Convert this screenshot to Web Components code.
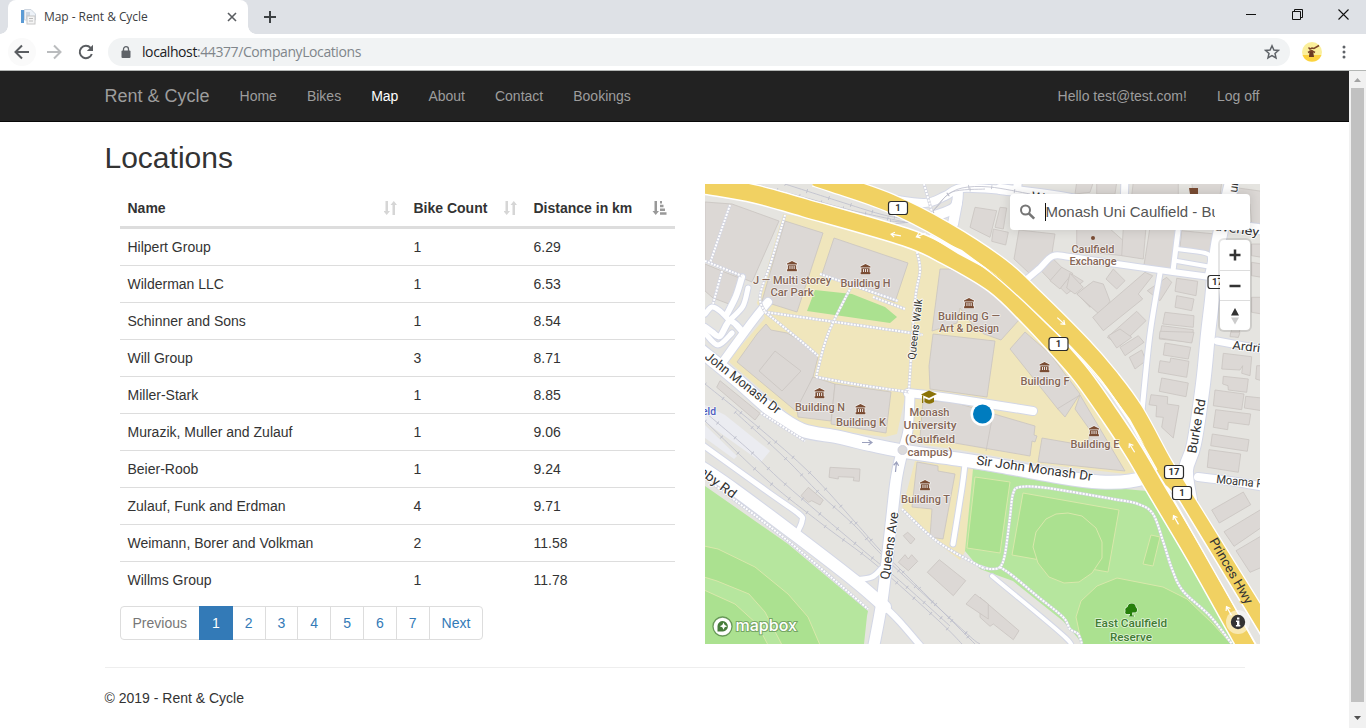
<!DOCTYPE html>
<html lang="en">
<head>
<meta charset="utf-8">
<title>Map - Rent &amp; Cycle</title>
<style>
html,body{margin:0;height:100%;overflow:hidden;background:#fff}
body{font-family:"Liberation Sans",Arial,sans-serif;font-size:14px;line-height:20px;color:#333}
</style>
</head>
<body>
<browser-window>
  <tab-strip slot="tabs">Map - Rent &amp; Cycle</tab-strip>
  <address-bar slot="toolbar" host="localhost" path=":44377/CompanyLocations"></address-bar>
  <site-nav></site-nav>
  <locations-page></locations-page>
  <scroll-bar slot="scroll"></scroll-bar>
</browser-window>
<script>
const define = (name, html) => customElements.define(name, class extends HTMLElement {
  constructor() {
    super();
    this.attachShadow({ mode: 'open' });
  }
  connectedCallback() {
    if (this.shadowRoot.childNodes.length) return;
    const t = document.createElement('template');
    t.innerHTML = typeof html === 'function' ? html(this) : html;
    this.shadowRoot.append(t.content.cloneNode(true));
  }
});

/* ---------- map drawing helpers ---------- */
const pts = s => s.trim().split(/\s+/).map(p => p.split(',').map(Number));
const smooth = s => {
  const p = pts(s);
  let d = `M${p[0]}`;
  for (let i = 0; i < p.length - 1; i++) {
    const a = p[i - 1] || p[i], b = p[i], c = p[i + 1], e = p[i + 2] || c;
    d += `C${b[0] + (c[0] - a[0]) / 6},${b[1] + (c[1] - a[1]) / 6} ${c[0] - (e[0] - b[0]) / 6},${c[1] - (e[1] - b[1]) / 6} ${c}`;
  }
  return d;
};
const local = (ox, oy, list) => list.map(s => {
  const q = pts(s).map(([x, y]) => `${(ox + x / 3).toFixed(1)},${(oy + y / 3).toFixed(1)}`).join(' ');
  return `<polygon points="${q}"/>`;
}).join('');
const polys = list => list.map(s => `<polygon points="${s}"/>`).join('');

const buildings = polys([
  '705,202 732,204 779,221 752,282 742,278 705,261',
  '705,264 722,271 742,279 729,304 713,298 705,291',
  '785,221 823,233 797,312 762,301',
  '834,238 908,263 895,302 822,274',
  '940,269 950,269 990,287 1019,320 1001,340 984,334 973,325 960,308 957,323 932,331',
  '933,334 995,341 987,397 930,389 929,366',
  '923,401 953,402 1035,426 1034,435 1037,436 1035,442 1032,441 1030,456 920,437',
  '1010,349 1025,332 1050,354 1080,394 1065,417 1057,408',
  '1075,409 1080,395 1125,471 1038,462 1042,438 1088,446 1090,430',
  '757,334 766,324 771,330 787,333 802,342 818,357 813,377 797,412 737,362',
  '813,377 835,384 831,421 798,417 797,408',
  '835,384 891,392 886,433 831,424',
  '917,462 938,466 938,471 955,474 943,539 930,537 932,509 912,507'
]) + local(890, 184, [
  '255,70 320,80 300,160 240,130', '330,70 350,72 340,135 315,130', '310,135 355,145 347,183 305,172',
  '387,138 495,150 480,245 418,268 372,225',
  '490,225 520,255 482,290 455,262', '515,250 548,268 510,315 480,290', '545,270 580,292 530,330 512,312', '600,300 600,370 562,330'
]) + local(1070, 184, [
  '20,130 115,130 160,170 158,215 20,200', '160,130 228,130 220,225 155,215', '240,130 322,130 305,258 222,243',
  '335,140 435,150 430,205 330,190', '130,255 165,290 140,315 108,285',
  '20,330 70,292 100,300 108,320 120,352 90,393', '0,268 40,310 15,330 -10,312',
  '225,265 248,275 205,330 218,345 100,440 68,400', '290,280 305,295 270,350 232,320',
  '200,382 228,410 150,485 112,460', '320,283 383,292 378,335 315,322', '320,335 372,345 365,380 315,370',
  '285,385 372,395 370,430 278,420', '275,425 370,437 365,475 268,465',
  '190,-5 325,-5 325,35 185,35', '365,-5 455,-5 450,35 370,35', '505,12 575,22 575,120 545,120 540,60 500,50',
  '545,180 575,180 575,220 545,215', '545,235 575,240 575,280 545,275', '545,340 575,340 575,390 545,385', '485,430 510,435 505,460 482,455',
  '20,-5 70,-5 60,25 15,30', '80,-5 140,-5 135,30 80,30'
]) + local(1070, 334, [
  '460,58 545,68 540,125 515,118 518,95 510,108 455,105', '460,127 535,135 530,175 475,168 474,155 458,150',
  '435,168 522,180 515,227 430,215', '527,187 575,192 575,230 523,222', '560,95 575,95 575,140 557,135',
  '437,227 542,240 537,273 475,265 473,287 430,280', '427,300 537,317 532,352 422,335', '417,347 512,360 505,415 412,400',
  '285,27 362,40 355,75 280,63', '270,-8 372,-5 365,27 268,12', '270,80 300,85 302,72 357,82 350,130 265,115',
  '275,132 355,147 348,188 268,172', '243,182 293,188 292,210 327,215 310,312 275,280 280,250 258,248 260,215 237,212',
  '115,5 150,-15 185,10 140,42', '205,5 222,25 165,65 150,40', '215,48 228,80 195,105 178,70', '482,-5 510,-5 505,10 480,8'
]) + local(980, 484, [
  '790,24 812,62 718,117 695,78', '845,75 845,130 762,187 732,143', '845,155 845,250 810,265 768,200', '0,340 35,370 117,440 100,467 40,420 30,427 0,400'
]) + local(705, 484, [
  '310,10 355,48 345,63 320,50 310,55 288,35', '608,145 630,165 617,180 595,155', '580,235 600,212 610,225 620,212 638,232 610,260',
  '703,227 782,290 745,335 667,265', '810,330 850,360 850,405 783,360'
]) + local(705, 334, [
  '375,400 465,405 463,442 445,440 447,430 400,428 400,435 372,430', '45,140 165,238 150,258 35,160'
]);

const roads = [
  [6, '742,277 736,296 727,314'], [5, '748,288 743,306 731,319'],
  [6, '705,327 712,332 720,336 730,321 742,331'], [5, '705,314 712,307 720,311 730,321'],
  [8, '768,302 752,322 722,363'], [5, '705,333 718,345 732,333'],
  [13, '690,342 705,354 738,381 772,411 802,430 838,437 872,445 902,451 957,459 1000,466 1060,477 1100,482 1130,481 1172,471'],
  [9, '910,396 908,430 902,452'], [11, '902,452 896,481 890,534 882,601 873,650'],
  [12, '700,466 735,490 798,537 855,581 885,607'], [6, '885,607 900,622 924,650'],
  [5, '700,443 768,492 799,514 802,521 798,531'], [5, '855,580 872,577 882,568'],
  [8, '908,393 950,398 1033,411'], [5, '965,464 962,488 953,544'],
  [14, '1233,178 1218,245 1212,300 1208,334 1203,384 1194,444 1186,470 1190,500'],
  [8, '1198,477 1230,481 1265,487'], [7, '1217,341 1265,350'],
  [10, '1000,189 1060,197 1130,211 1215,223 1265,230'], [7, '1125,178 1124,210'], [8, '1018,178 1017,192'],
  [6, '1027,279 1040,268 1053,256 1070,257 1117,264 1173,272 1210,277'],
  [5, '1160,273 1150,334 1142,411'], [5, '1178,231 1173,271'],
  [4, '1177,249 1205,253 1210,259 1207,275'], [4, '1177,261 1217,268'],
  [8, '890,199 925,203 945,196 962,188 1003,190'], [10, '935,216 955,207 958,190'], [10, '953,224 957,203']
  , [4, '992,576 1066,638 1067,648']
];
const roadLayer = roads.map(([w, s]) => `<path stroke="#d3d7e6" stroke-width="${w + 2}" d="${smooth(s)}"/>`).join('')
  + roads.map(([w, s]) => `<path stroke="#fff" stroke-width="${w}" d="${smooth(s)}"/>`).join('');

const paths = [
  '730,205 710,263', '705,261 742,276', '722,271 713,304', '785,215 771,262 760,296 765,312', '765,312 905,332 921,335', '820,274 898,301',
  '873,297 905,309', '851,287 828,334 816,377', '765,312 802,342 818,356', '816,377 860,385 909,392', '917,252 920,271 915,301 909,389',
  '980,566 990,569 1000,567 1005,554 1010,517 1013,494 1020,487 1047,488 1113,499 1138,504 1153,514 1163,541 1172,569 1183,591 1210,616 1232,644',
  '1000,567 1013,576 1037,596 1063,617 1070,629 1078,634 1082,644', '902,509 938,542 985,569', '705,478 788,541 868,609', '761,413 805,441',
  '924,184 932,212'
];
const pathLayer = paths.map(s => `<path stroke="#d2d4e0" stroke-width="3" d="${smooth(s)}"/><path stroke="#fff" stroke-width="2" stroke-dasharray="2 1.2" d="${smooth(s)}"/>`).join('');

const rails = ['705,384 758,427 810,473 855,522 880,550 902,571 975,644', '705,421 768,481 822,524 875,564 939,621 962,644',
  '735,412 785,458 820,494 855,526 885,558 965,632 980,644', '700,408 748,449 785,484 858,546 900,581 950,626',
  '755,184 803,197 850,210 905,222', '785,184 838,201 880,214 905,219'];
const curves = ['890,221 915,222 930,214 945,197 962,188 990,187 1030,194', '890,224 920,220 936,208 952,192 985,189'];
const railLine = s => `<path stroke="#bcbecb" stroke-width=".8" d="${smooth(s)}"/><path stroke="#bcbecb" stroke-width="4" stroke-dasharray=".8 22" d="${smooth(s)}"/>`;

const hwyA = smooth('815,177 833,183 890,203 945,231 1000,267 1034,298 1082,346 1109,377 1134,411 1162,462 1181,493 1251,606 1282,657');
const hwyB = smooth('690,182 705,185 755,194 805,208 905,237 945,255 994,284 1029,317 1056,346 1082,376 1111,417 1134,452 1154,486 1199,562 1252,657');

const label = (x, y, t, w) => `<text x="${x}" y="${y}" textLength="${w}" lengthAdjust="spacingAndGlyphs">${t}</text>`;
const street = (x, y, r, t, w, size = 13) => `<text transform="translate(${x} ${y}) rotate(${r})" font-size="${size}" textLength="${w}" lengthAdjust="spacingAndGlyphs">${t}</text>`;
const museum = (x, y) => `<path transform="translate(${x - 5.5} ${y - 5})" d="M5.5 0 10.5 2.4V3.6H.5V2.4zM1.4 4.2H9.6V8.2H10.4V10.2H.6V8.2H1.4zM3 5V8H3.9V5zM5.1 5V8H6V5zM7.2 5V8H8.1V5z" fill="#7a4c33" fill-rule="evenodd" stroke="#fff" stroke-opacity=".7" stroke-width="1.2" paint-order="stroke"/>`;
const shield = (x, y, t) => `<rect x="${x - 9.5}" y="${y - 6.5}" width="19" height="13" rx="2.5" fill="#fff" stroke="#2b2b2b" stroke-width="1.2"/><text x="${x}" y="${y + 3.3}" text-anchor="middle" font-size="9.5" font-weight="700" fill="#333">${t}</text>`;
const arrow = (x, y, r, c = '#fff') => `<path transform="translate(${x} ${y}) rotate(${r})" d="M-5 0H5M1.5-2.5 5 0 1.5 2.5" fill="none" stroke="${c}" stroke-width="1.2"/>`;

define('campus-map', `
<style>
:host{display:block;flex:none;position:relative;width:555.5px;height:460px;overflow:hidden;background:#e5e4e0}
.map{display:block}
.search{position:absolute;left:305px;top:10px;width:240px;height:36px;background:#fff;border-radius:4px;box-shadow:0 0 10px 2px rgba(0,0,0,.1);display:flex;align-items:center;box-sizing:border-box;padding:0 35px 0 9px}
.search svg{flex:none;margin-right:9px}
.field{flex:1;overflow:hidden;white-space:nowrap;font-size:15px;line-height:22px;color:#555;border-left:1px solid #111;height:18px;display:flex;align-items:center}
.zoom{position:absolute;left:515px;top:56px;width:30px;background:#fff;border-radius:4px;box-shadow:0 0 0 2px rgba(0,0,0,.1);display:flex;flex-direction:column}
.zoom div{height:30px;box-sizing:border-box;display:flex;align-items:center;justify-content:center}
.zoom div+div{border-top:1px solid #ddd}
</style>
<svg class="map" width="556" height="460" viewBox="705 184 556 460" font-family="Roboto,sans-serif">
<rect x="705" y="184" width="556" height="460" fill="#e5e4e0"/>
<g fill="#f0e6bc">
<polygon points="783,214 830,222 905,246 942,264 992,292 1023,319 1045,346 1072,374 1100,412 1127,449 1140,471 1126,474 1040,464 960,450 925,445 912,436 910,395 904,402 897,434 885,437 832,430 806,425 790,415 728,361 765,318 757,303"/>
<polygon points="915,461 975,468 966,550 960,560 940,545 902,509"/>
</g>
<g fill="#b6e69e">
<polygon points="705,486 788,544 868,611 867,616 864,644 705,644"/>
<polygon points="973,469 1090,486 1147,491 1242,650 1082,644 1077,637 1063,621 1013,581 980,569 965,551"/>
</g>
<g fill="#abe190" stroke="#d9e8ab" stroke-width="1">
<polygon points="815,290 852,294 885,307 897,317 890,323 807,311" stroke="none"/>
<path d="M704 546 718 549 755 567 788 594 808 617 820 645H782L765 612 749 594 717 581 704 577Z"/>
<path d="M704 590 735 604 757 624 768 645H704Z"/>
<polygon points="975,477 1010,482 1000,553 967,548"/>
<polygon points="1023,493 1119,510 1108,572 1012,555"/>
<polygon points="1068,513 1082,516 1096,528 1102,542 1102,558 1092,573 1079,582 1064,583 1049,577 1038,563 1033,547 1036,532 1046,519 1056,514"/>
<polygon points="1151,535 1160,537 1153,566 1143,564"/>
<polygon points="1117,578 1163,587 1187,599 1213,624 1232,645 1082,645 1076,617 1081,601 1097,586"/>
</g>
<g fill="#ebecf1"><polygon points="725,415 770,451 761,462 705,422 705,405"/><polygon points="705,425 737,456 734,459 705,438"/></g>
<g fill="#dcd8d5" stroke="#c9c4c0" stroke-width=".8">${buildings}<polygon points="775,351 801,371 782,391 759,371"/><path d="M992 419 986 451M1080 395 1057 409"/></g>
<g fill="none">${rails.map(railLine).join('')}</g>
<g fill="none" stroke-linecap="round" stroke-linejoin="round">${roadLayer}</g>
<g fill="none">${curves.map(railLine).join('')}</g>
<circle cx="902.5" cy="450" r="4.5" fill="#dcdbdc" stroke="#d0d2de"/>
<g fill="none">${pathLayer}</g>
<g fill="none"><path d="${hwyA}" stroke="#fff" stroke-width="20"/><path d="${hwyB}" stroke="#fff" stroke-width="20"/><path d="${hwyA}" stroke="#f1d162" stroke-width="17.5"/><path d="${hwyB}" stroke="#f1d162" stroke-width="17"/>
<path d="${smooth('930,235 962,253 990,272 1021,299 1050,327 1071,347 1100,379 1129,421 1157,470')}" stroke="#fff" stroke-width="1.3"/></g>
<path d="M925 233.500 962 250 990 271 958 254ZM1100 378 1130 419 1145 446 1117 405Z" fill="#fff"/>
<path d="M1166 486 1173 493 1180 502 1262 637V655L1213 569Z" fill="#e5e4e0" stroke="#fff" stroke-width="1.5"/>
${arrow(896, 235, 190)}${arrow(921, 235, 158)}${arrow(1061, 321, 42)}${arrow(1132, 448, 238)}${arrow(1176, 520, 240)}${arrow(1229, 611, 240)}
${arrow(867, 442.5, 0, '#9ba0bd')}${arrow(896, 467, 276, '#9ba0bd')}
<g fill="#333" stroke="#fff" stroke-width="2" stroke-opacity=".8" paint-order="stroke" stroke-linejoin="round">
${street(704, 358, 38, 'John Monash Dr', 92)}${street(976, 464.5, 8, 'Sir John Monash Dr', 117)}${street(1196, 454, -80, 'Burke Rd', 55)}
${street(889, 580, -82, 'Queens Ave', 68)}${street(1216, 483, 6, 'Moama R', 47, 12)}
${street(1232, 349, 7, 'Ardri', 28, 12)}${street(698, 473, 37, 'nby Rd', 43)}${street(1214, 230, 8, 'averley', 45, 12)}${street(915, 360, -83, 'Queens Walk', 61, 10.5)}${street(1237, 193, -82, 'ur', 11, 12)}${street(1031, 200, 8, 'W', 13, 12)}
<g stroke="#f1d162">${street(1209, 541, 60, 'Princes Hwy', 74)}</g>
</g>
<g font-size="11" fill="#856656" font-weight="500" text-anchor="middle" stroke="#fff" stroke-width="1.6" stroke-opacity=".65" paint-order="stroke" stroke-linejoin="round">
${label(792, 284, 'J — Multi storey', 78)}${label(792, 296, 'Car Park', 43)}${label(865.5, 286.5, 'Building H', 50)}
${label(969, 320, 'Building G —', 62)}${label(969, 332, 'Art &amp; Design', 60)}${label(1093, 253, 'Caulfield', 43)}${label(1093, 265, 'Exchange', 47)}
${label(1045, 385, 'Building F', 49)}${label(820, 410.5, 'Building N', 50)}${label(861, 426, 'Building K', 50)}${label(1095, 448, 'Building E', 49)}${label(925.5, 502.5, 'Building T', 49)}
${label(929.5, 416, 'Monash', 40)}${label(930, 429, 'University', 53)}${label(930, 442.5, '(Caulfield', 50)}${label(930, 455.5, 'campus)', 45)}
<g fill="#427b34">${label(1131, 627, 'East Caulfield', 72)}${label(1131, 640.5, 'Reserve', 42)}</g>
<g fill="#4d5bc0">${label(709, 415, 'eld', 14)}</g>
</g>
${[[792, 266], [865.5, 269], [969, 303], [1044.5, 367], [819.5, 393], [860.5, 409], [1094, 431], [925, 485]].map(a => museum(...a)).join('')}
<path d="M1189 188H1198V194H1190Z" fill="#7a4c33"/><circle cx="1093" cy="238" r="2" fill="#7a4c33"/>
<path d="M921 394.500 929 390.500 937 394 929 398ZM924.500 398 929 400.200 934 397.500V402Q929 405.500 924.500 402ZM922 395.500V403H923.200V395.500Z" fill="#8b7308"/>
<path d="M1130 614.500V611.500L1131 612.500V614H1126.500Q1124.500 613.500 1125.500 611Q1124.500 608 1127.500 607Q1128.500 603.200 1132 603.600Q1135.500 604 1135.700 607Q1138 609 1136.500 612Q1135.500 612.800 1132.200 612.500V615.500H1134V616.500H1128.500V615.500H1130Z" fill="#26800a" stroke="#fff" stroke-opacity=".8" stroke-width="1.2" paint-order="stroke"/>
${shield(898, 208, '1')}${shield(1058.5, 344, '1')}${shield(1174, 472, '17')}${shield(1182, 493, '1')}${shield(1217.5, 282, '17')}
<circle cx="982.5" cy="414" r="12" fill="#fff"/><circle cx="982.5" cy="414" r="9.5" fill="#007cbf"/>
<g><circle cx="722.5" cy="626.5" r="9.5" fill="#fff" stroke="#4f8240" stroke-opacity=".8" stroke-width="1.3"/><path d="M717.500 631.500V626A5.200 5.200 0 1 1 723 631.500Z" fill="#477c3b"/><path d="M723.500 622.500 724.700 625.100 727.200 626.200 724.700 627.300 723.500 629.800 722.300 627.300 719.800 626.200 722.300 625.100Z" fill="#fff"/>
<text x="735.5" y="631" font-family="Inter,sans-serif" font-weight="500" font-size="16.5" textLength="61.5" lengthAdjust="spacingAndGlyphs" fill="#fff" stroke="#6c9c5c" stroke-width="2" stroke-opacity=".85" paint-order="stroke">mapbox</text></g>
<circle cx="1238" cy="622" r="12" fill="#fff" fill-opacity=".5"/><circle cx="1238" cy="622" r="7.2" fill="#333"/><path d="M1237 617.500H1239.400V619.500H1237ZM1236 620.500H1239.400V625H1240.300V626.500H1235.900V625H1237V622H1236Z" fill="#fff"/>
</svg>
<div class="search"><svg width="17" height="17" viewBox="0 0 17 17" fill="none" stroke="#757575" stroke-width="2"><circle cx="6.500" cy="6" r="4.500"/><path d="M9.800 9.300 15.200 14.700" stroke-width="2.600"/></svg><div class="field">Monash Uni Caulfield - Bu</div></div>
<div class="zoom"><div><svg width="12" height="12"><path d="M6 .5V11.500M.5 6H11.500" stroke="#333" stroke-width="2.500"/></svg></div><div><svg width="12" height="12"><path d="M.5 6H11.500" stroke="#333" stroke-width="2.500"/></svg></div><div><svg width="10" height="18"><path d="M5 1 9 8.500H1Z" fill="#333"/><path d="M5 17.500 9 10.500H1Z" fill="#ccc"/></svg></div></div>`);

/* ---------- browser chrome ---------- */
define('browser-window', `
<style>
:host{display:flex;flex-direction:column;width:1366px;height:728px}
.view{flex:1;display:flex;min-height:0}
.doc{flex:1;overflow:hidden;background:#fff}
</style>
<slot name="tabs"></slot><slot name="toolbar"></slot>
<div class="view"><div class="doc"><slot></slot></div><slot name="scroll"></slot></div>`);

define('tab-strip', `
<style>
:host{display:flex;height:34px;background:#dee1e6;align-items:stretch;font-family:"Open Sans","Noto Sans",sans-serif;color:#3c4043}
.tab{position:relative;width:240px;margin-left:8px;background:#fff;border-radius:8px 8px 0 0;display:flex;align-items:center;box-sizing:border-box;padding:0 11px 0 12px}
.tab:before,.tab:after{content:"";position:absolute;bottom:0;width:8px;height:8px;background:radial-gradient(circle at 0 0,transparent 7.5px,#fff 8px)}
.tab:before{left:-8px}
.tab:after{right:-8px;background:radial-gradient(circle at 100% 0,transparent 7.5px,#fff 8px)}
.title{flex:1;margin-left:8px;font-size:12px;letter-spacing:-.06px;white-space:nowrap}
.plus{margin:11px 0 0 16px}
.win{margin-left:auto;display:flex;gap:35px;align-items:center;height:28px;padding-right:17.500px}
</style>
<div class="tab">
<svg width="16" height="16"><path d="M4.500.5H11L15.500 5V11H4.500Z" fill="#edf2f8" stroke="#cdd5df"/><rect x="1" y="1" width="3" height="13" fill="#5b9bd5"/><rect x="6" y="3" width="4" height="7" fill="#cbd6e3"/><rect x="7" y="7" width="8" height="8" fill="#f5f5f5" stroke="#c6c6c6"/><path d="M9 9.500H13M9 12H13" stroke="#bbb"/></svg>
<span class="title"><slot></slot></span>
<svg width="10" height="10"><path d="M1 1 9 9M9 1 1 9" stroke="#5a5d61" stroke-width="1.600"/></svg>
</div>
<svg class="plus" width="12" height="12"><path d="M6 0V12M0 6H12" stroke="#3c4043" stroke-width="2"/></svg>
<div class="win">
<svg width="11" height="11"><path d="M0 5.500H10" stroke="#111"/></svg>
<svg width="11" height="11" fill="none" stroke="#111"><path d="M.5 2.500H8.500V10.500H.5ZM2.500 2.500V.5H10.500V8.500H8.500"/></svg>
<svg width="11" height="11"><path d="M.5.5 10.500 10.500M10.500.5.5 10.500" stroke="#111" stroke-width="1.100"/></svg>
</div>`);

define('address-bar', el => `
<style>
:host{display:flex;align-items:center;height:37px;box-sizing:border-box;border-bottom:1px solid #b3b6b4;background:#fff;padding:0 20px 0 8px}
.ico{width:28px;height:28px;border-radius:50%;display:flex;align-items:center;justify-content:center}
.back{background:#fafafa}
.pill{flex:1;height:28px;border-radius:14px;background:#f1f3f4;display:flex;align-items:center;padding:0 10px 0 13px;margin-left:8px}
.nav{display:flex;gap:4px}
.url{flex:1;margin-left:11px;font:14px/20px "Open Sans","Noto Sans",sans-serif;color:#80868b;letter-spacing:-.41px}
.url b{font-weight:400;color:#202124}
.me{margin:0 20px 0 12px}
</style>
<div class="nav">
<div class="ico back"><svg width="16" height="16" fill="none" stroke="#5a5d61" stroke-width="2"><path d="M15 8H2M8 1.500 1.500 8 8 14.500"/></svg></div>
<div class="ico"><svg width="16" height="16" fill="none" stroke="#babcbe" stroke-width="2"><path d="M1 8H14M8 1.500 14.500 8 8 14.500"/></svg></div>
<div class="ico"><svg width="16" height="16" fill="none" stroke="#5a5d61" stroke-width="2"><path d="M13.800 10A6.200 6.200 0 1 1 12.600 3.800"/><path d="M15 .8V7H8.800Z" fill="#5a5d61" stroke="none"/></svg></div>
</div>
<div class="pill"><svg width="10" height="13"><rect y="4.500" x=".5" width="9" height="7.500" rx="1" fill="#5f6368"/><path d="M2.500 5V3.200A2.500 2.500 0 0 1 7.500 3.200V5" fill="none" stroke="#5f6368" stroke-width="1.300"/></svg>
<span class="url"><b>${el.getAttribute('host')}</b>${el.getAttribute('path')}</span>
<svg width="16" height="16" viewBox="0 0 16 16"><path d="M8 1.800 9.900 6 14.400 6.400 11 9.400 12 13.900 8 11.500 4 13.900 5 9.400 1.600 6.400 6.100 6Z" fill="none" stroke="#5f6368" stroke-width="1.500"/></svg></div>
<svg class="me" width="20" height="20"><circle cx="10" cy="10" r="10" fill="#fbef9b"/><path d="M.6 13H19.400A10 10 0 0 1 .6 13Z" fill="#fdd23e"/><path d="M7.500 8.500H11L12 15H7Z" fill="#6b3a22"/><path d="M6.500 5.500 8 7 10 6 12 6.500 17 3.500M6 10.500 9.500 8.500 13 10.500" stroke="#7a4427" stroke-width="1.500" fill="none"/></svg>
<svg width="4" height="14" fill="#5f6368"><circle cx="2" cy="2" r="1.500"/><circle cx="2" cy="7" r="1.500"/><circle cx="2" cy="12" r="1.500"/></svg>`);

define('scroll-bar', `
<style>
:host{width:17px;background:#f1f1f1;display:flex;flex-direction:column;align-items:center}
.thumb{flex:1;width:13px;background:#c1c1c1}
.a{height:17px;display:flex;align-items:center}
.d{height:26px;display:flex;align-items:center;padding-top:6px;box-sizing:border-box}
</style>
<div class="a"><svg width="7" height="4"><path d="M0 4 3.500 0 7 4Z" fill="#a3a3a3"/></svg></div>
<div class="thumb"></div>
<div class="d"><svg width="7" height="4"><path d="M0 0H7L3.500 4Z" fill="#505050"/></svg></div>`);

/* ---------- site ---------- */
define('site-nav', `
<style>
:host{display:block;background:#222;border-bottom:1px solid #080808;height:50px}
nav{display:flex;height:50px;align-items:center;padding:0 74.500px 0 89.500px;color:#9d9d9d}
a{padding:0 15px;white-space:nowrap}
.brand{font-size:18px}
.on{color:#fff}
.push{margin-left:auto}
</style>
<nav><a class="brand">Rent &amp; Cycle</a><a>Home</a><a>Bikes</a><a class="on">Map</a><a>About</a><a>Contact</a><a>Bookings</a><a class="push">Hello test@test.com!</a><a>Log off</a></nav>`);

const rows = [['Hilpert Group', 1, '6.29'], ['Wilderman LLC', 1, '6.53'], ['Schinner and Sons', 1, '8.54'], ['Will Group', 3, '8.71'], ['Miller-Stark', 1, '8.85'],
  ['Murazik, Muller and Zulauf', 1, '9.06'], ['Beier-Roob', 1, '9.24'], ['Zulauf, Funk and Erdman', 4, '9.71'], ['Weimann, Borer and Volkman', 2, '11.58'], ['Willms Group', 1, '11.78']];
const both = '<svg width="14" height="14" fill="#d6d6d6"><path d="M1.500 0H4V10H6L2.700 14-.5 10H1.500ZM8.500 14H11V4H13L9.800 0 6.500 4H8.500Z"/></svg>';
const asc = '<svg width="15" height="14" fill="#999"><path d="M2.500 0H5V10H7L3.700 14 .5 10H2.500ZM8 0H10V2.500H8ZM8 3.700H11.500V6.200H8ZM8 7.400H13V9.900H8ZM8 11.200H14.500V13.700H8Z"/></svg>';

define('location-table', `
<style>
:host{display:block;margin-top:6px}
.r{display:grid;grid-template-columns:286px 120px 149px;border-top:1px solid #ddd}
.r>*{padding:8px}
.h{border-top:0;border-bottom:2px solid #ddd;font-weight:700}
.h>*{display:flex;justify-content:space-between;align-items:center;white-space:nowrap}
.h svg{flex:none}
</style>
<div class="r h"><div>Name${both}</div><div>Bike Count${both}</div><div>Distance in km${asc}</div></div>
${rows.map(r => `<div class="r">${r.map(c => `<div>${c}</div>`).join('')}</div>`).join('')}`);

define('page-pager', `
<style>
:host{display:flex;margin-top:8px}
a{padding:6px 12px;border:1px solid #ddd;margin-left:-1px;color:#337ab7;background:#fff}
a:first-of-type{margin-left:0;border-radius:4px 0 0 4px;color:#777}
a:last-of-type{border-radius:0 4px 4px 0}
a.on{background:#337ab7;border-color:#337ab7;color:#fff;z-index:1}
</style>
<a>Previous</a><a class="on">1</a>${[2, 3, 4, 5, 6, 7].map(n => `<a>${n}</a>`).join('')}<a>Next</a>`);

define('locations-page', `
<style>
:host{display:block;padding:0 104.500px}
h2{margin:19px 0 10px;font-size:30px;line-height:33px;font-weight:400}
.row{display:flex;gap:30px;margin-left:15px;height:463px}
.left{width:555px;flex:none}
.line{border-top:1px solid #eee;margin:20px 0}
</style>
<h2>Locations</h2>
<div class="row"><div class="left"><location-table></location-table><page-pager></page-pager></div><campus-map></campus-map></div>
<div class="line"></div>
<div>© 2019 - Rent &amp; Cycle</div>`);
</script>
</body>
</html>
